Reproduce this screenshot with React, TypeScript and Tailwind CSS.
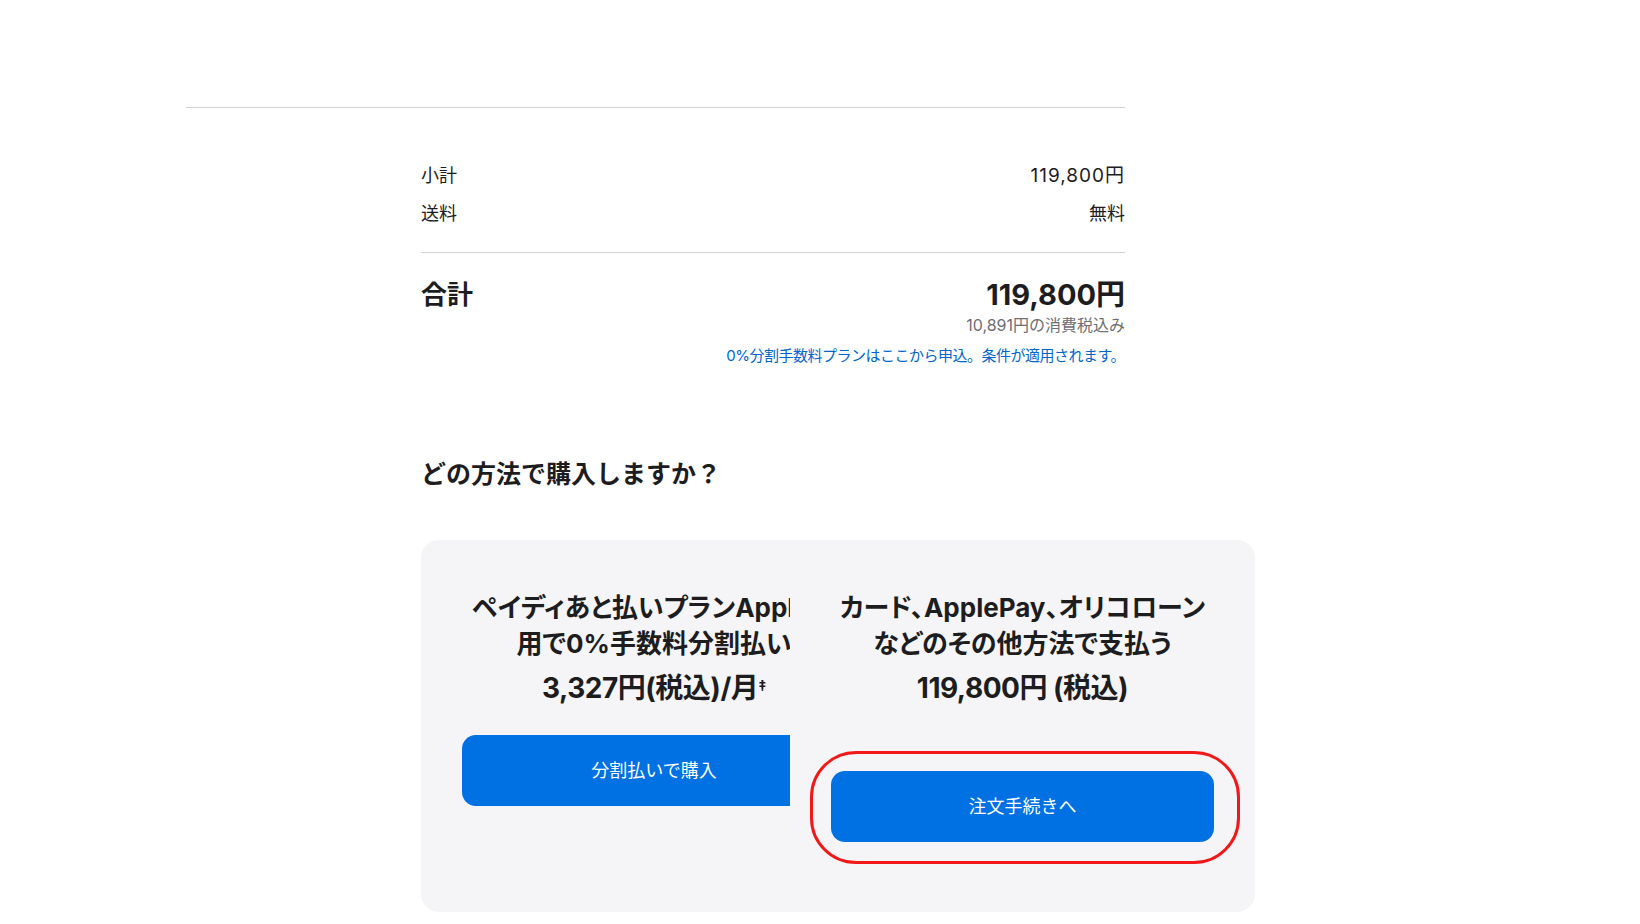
const font = "font-['Inter','Noto_Sans_CJK_JP',sans-serif]";

export default function App() {
  return (
    <div className={`min-h-[924px] w-full bg-white text-[#1d1d1f] ${font}`}>
      <div className="ml-[186px] w-[939px] pt-[107px]">
        <div className="border-t border-[#d2d2d7]" />

        {/* summary */}
        <div className="ml-[235px] w-[704px] pt-[55px]">
          <div className="flex justify-between text-[18px] leading-[26px]">
            <span>小計</span>
            <span className="text-[19px] tracking-[1px]">119,800円</span>
          </div>
          <div className="mt-[12px] flex justify-between text-[18px] leading-[26px]">
            <span>送料</span>
            <span>無料</span>
          </div>
          <div className="mt-[25px] border-t border-[#d2d2d7]" />

          <div className="mt-[26px] flex items-start justify-between">
            <span className="text-[26px] font-bold leading-[32px]">合計</span>
            <div className="flex flex-col items-end">
              <span className="text-[29px] font-bold leading-[32px]">119,800円</span>
              <span className="mt-[4px] text-[16px] leading-[20px] text-[#6e6e73]">10,891円の消費税込み</span>
              <a href="#" className="mt-[11px] text-[15px] leading-[20px] tracking-[-0.5px] text-[#0066cc]">
                0%分割手数料プランはここから申込。条件が適用されます。
              </a>
            </div>
          </div>

          <h2 className="mt-[92px] text-[25px] font-bold leading-[32px]">どの方法で購入しますか？</h2>
        </div>

        {/* payment options */}
        <div className="ml-[235px] mt-[50px] flex w-[834px] gap-[41px] rounded-[18px] bg-[#f5f5f7] px-[41px] pt-[50px] pb-[70px]">
          <div className="w-[328px] self-start overflow-hidden">
            <div className="flex w-[384px] flex-col items-center">
              <div className="flex flex-col items-center text-[26px] font-bold leading-[36px] [font-feature-settings:'palt']">
                <span className="whitespace-nowrap">ペイディあと払いプランApple利</span>
                <span className="whitespace-nowrap">用で0%手数料分割払い</span>
              </div>
              <div className="mt-[8px] whitespace-nowrap text-[28px] font-bold leading-[36px] tracking-[-0.5px]">
                3,327円(税込)/月<sup className="text-[14px]">‡</sup>
              </div>
              <button className="mt-[29px] h-[71px] w-[384px] rounded-[14px] bg-[#0071e3] text-[18px] text-white">
                分割払いで購入
              </button>
            </div>
          </div>

          <div className="flex w-[383px] flex-col items-center">
            <div className="flex flex-col items-center text-[26px] font-bold leading-[36px] [font-feature-settings:'palt']">
              <span className="whitespace-nowrap">カード、ApplePay、オリコローン</span>
              <span className="whitespace-nowrap">などのその他方法で支払う</span>
            </div>
            <div className="mt-[8px] whitespace-nowrap text-[28px] font-bold leading-[36px] tracking-[-0.5px]">
              119,800円 (税込)
            </div>
            <div className="relative mt-[65px]">
              <button className="h-[71px] w-[383px] rounded-[14px] bg-[#0071e3] text-[18px] text-white">
                注文手続きへ
              </button>
              <div className="pointer-events-none absolute -top-[20px] -bottom-[22px] -left-[21px] -right-[26px] rounded-[46px] border-[3px] border-[#f21818]" />
            </div>
          </div>
        </div>
      </div>
    </div>
  );
}
